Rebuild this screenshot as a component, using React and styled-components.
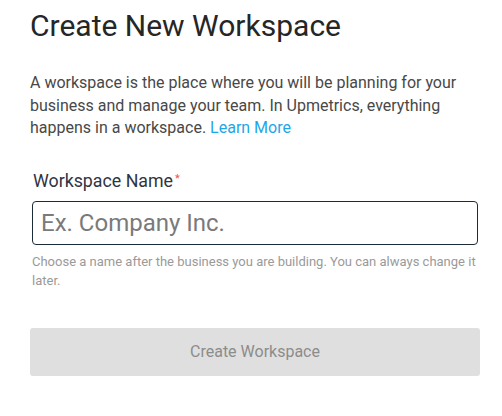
import styled, { createGlobalStyle } from "styled-components";

const GlobalStyle = createGlobalStyle`
    body {
        margin: 0;
        background: #ffffff;
        font-family: Roboto, "Liberation Sans", sans-serif;
    }
`;

const App = () => {
    return (
        <Page>
            <GlobalStyle />
            <Title>Create New Workspace</Title>
            <Intro>
                A workspace is the place where you will be planning for your business and manage your team.
                In Upmetrics, everything happens in a workspace. <LearnMore href="#">Learn More</LearnMore>
            </Intro>
            <Field>
                <Label>
                    Workspace Name<Required>*</Required>
                </Label>
                <NameInput placeholder="Ex. Company Inc." />
                <Hint>
                    Choose a name after the business you are building. You can always change it later.
                </Hint>
            </Field>
            <SubmitButton disabled>Create Workspace</SubmitButton>
        </Page>
    );
};

const Page = styled.div`
    width: 450px;
    padding: 8px 0 0 30px;
    display: flex;
    flex-direction: column;
`;

const Title = styled.h1`
    margin: 0;
    font-size: 30px;
    font-weight: 400;
    line-height: 36px;
    color: #262626;
`;

const Intro = styled.p`
    margin: 28px 0 0;
    font-size: 16px;
    line-height: 22.5px;
    color: #484848;
`;

const LearnMore = styled.a`
    color: #1ea7e8;
    text-decoration: none;
`;

const Field = styled.div`
    display: flex;
    flex-direction: column;
    margin-top: 30px;
    padding-left: 2px;
`;

const Label = styled.label`
    font-size: 17.8px;
    line-height: 22px;
    color: #2f3542;
    padding-left: 1px;
`;

const Required = styled.span`
    color: #f0504f;
    font-size: 11px;
    vertical-align: top;
    margin-left: 2px;
    position: relative;
    top: -2px;
`;

const NameInput = styled.input`
    box-sizing: border-box;
    width: 446px;
    height: 44px;
    margin-top: 9px;
    padding: 0 8px;
    border: 1px solid #1c2b38;
    border-radius: 4px;
    font-family: Roboto, "Liberation Sans", sans-serif;
    font-size: 24px;
    color: #333333;
    outline: none;

    &::placeholder {
        color: #7a7a7a;
    }
`;

const Hint = styled.div`
    margin-top: 7px;
    font-size: 13px;
    line-height: 19px;
    color: #9a9a9a;
`;

const SubmitButton = styled.button`
    margin-top: 38px;
    width: 450px;
    height: 48px;
    border: none;
    border-radius: 3px;
    background: #dfdfdf;
    color: #8c8c8c;
    font-family: Roboto, "Liberation Sans", sans-serif;
    font-size: 16px;
`;

export default App;
